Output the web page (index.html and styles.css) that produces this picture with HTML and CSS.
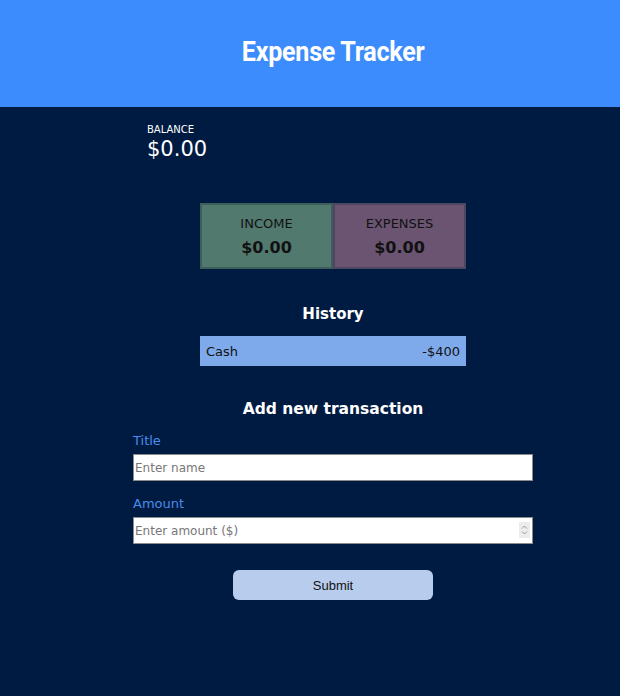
FILE: index.html
```html
<!DOCTYPE html>
<html lang="en">
<head>
<meta charset="utf-8">
<title>Expense Tracker</title>
<link rel="stylesheet" href="styles.css">
</head>
<body>
<header class="header">
  <h1 class="title">Expense Tracker</h1>
</header>
<main class="container">
  <section class="balance">
    <div class="balance-label">BALANCE</div>
    <div class="balance-value">$0.00</div>
  </section>
  <section class="summary">
    <div class="card card-income">
      <div class="card-label">INCOME</div>
      <div class="card-value">$0.00</div>
    </div>
    <div class="card card-expense">
      <div class="card-label">EXPENSES</div>
      <div class="card-value">$0.00</div>
    </div>
  </section>
  <h2 class="section-title history-title">History</h2>
  <ul class="history">
    <li class="history-item"><span>Cash</span><span>-$400</span></li>
  </ul>
  <h2 class="section-title form-title">Add new transaction</h2>
  <form class="form">
    <label class="field-label" for="title">Title</label>
    <input class="field" id="title" type="text" placeholder="Enter name">
    <label class="field-label" for="amount">Amount</label>
    <div class="field-wrap">
      <input class="field" id="amount" type="number" placeholder="Enter amount ($)">
      <span class="spin"><svg width="11" height="14" viewBox="0 0 11 14"><path d="M3 5.5 L5.5 3 L8 5.5 M3 8.5 L5.5 11 L8 8.5" fill="none" stroke="#9a9a9a" stroke-width="1"/></svg></span>
    </div>
    <button class="submit" type="button">Submit</button>
  </form>
</main>
</body>
</html>
```
FILE: styles.css
```css
* { box-sizing: border-box; }
html, body { margin: 0; padding: 0; }
body {
  background: #001b42;
  min-height: 696px;
  font-family: "DejaVu Sans", sans-serif;
  color: #fff;
}
.header {
  background: #3d8cfd;
  height: 107px;
  display: flex;
  align-items: center;
  justify-content: center;
  padding-left: 46px;
  padding-bottom: 4px;
}
.title {
  margin: 0;
  font-family: Roboto, sans-serif;
  font-weight: 700;
  font-size: 27px;
  letter-spacing: -0.3px;
  transform: scaleX(0.93);
  color: #fff;
}
.container {
  width: 400px;
  margin-left: 133px;
  display: flex;
  flex-direction: column;
}
.balance {
  padding: 17px 0 0 14px;
}
.balance-label { font-size: 10px; line-height: 12px; }
.balance-value { font-size: 21px; line-height: 26px; }
.summary {
  display: flex;
  justify-content: center;
  margin-top: 41px;
}
.card {
  width: 133px;
  height: 66px;
  border: 2px solid;
  display: flex;
  flex-direction: column;
  align-items: center;
  padding-top: 11px;
  color: #111;
}
.card-income { background: #52796e; border-color: #3d5e5a; }
.card-expense { background: #6a5471; border-color: #4e4560; }
.card-label { font-size: 13px; line-height: 16px; }
.card-value { font-size: 16px; font-weight: 700; line-height: 20px; margin-top: 6px; }
.section-title {
  margin: 0;
  text-align: center;
  font-size: 15px;
  font-weight: 700;
  line-height: 20px;
}
.history-title { margin-top: 35px; }
.history {
  list-style: none;
  margin: 12px auto 0;
  padding: 0;
  width: 266px;
}
.history-item {
  display: flex;
  justify-content: space-between;
  background: #7eaaec;
  color: #111;
  height: 30px;
  align-items: center;
  padding: 0 6px;
  font-size: 13px;
}
.form-title { margin-top: 33px; font-size: 15.5px; }
.form { display: flex; flex-direction: column; margin-top: 14px; }
.field-label { color: #4b8bea; font-size: 13px; line-height: 16px; margin-bottom: 5px; }
.field {
  width: 400px;
  height: 27px;
  border: 1px solid #8b8b8b;
  font-family: "DejaVu Sans", sans-serif;
  font-size: 12px;
  padding: 0 1px;
  margin-bottom: 15px;
  background: #fff;
  color: #222;
}
.field::placeholder { color: #777; }
.field-wrap { position: relative; }
.spin {
  position: absolute;
  right: 3px;
  top: 5px;
  width: 11px;
  height: 16px;
  background: #ececec;
  display: flex;
  align-items: center;
  justify-content: center;
}
.submit {
  align-self: center;
  width: 200px;
  height: 30px;
  margin-top: 11px;
  background: #b8cdee;
  border: none;
  border-radius: 6px;
  font-family: "Liberation Sans", Arial, sans-serif;
  font-size: 13px;
  color: #111;
}
```
